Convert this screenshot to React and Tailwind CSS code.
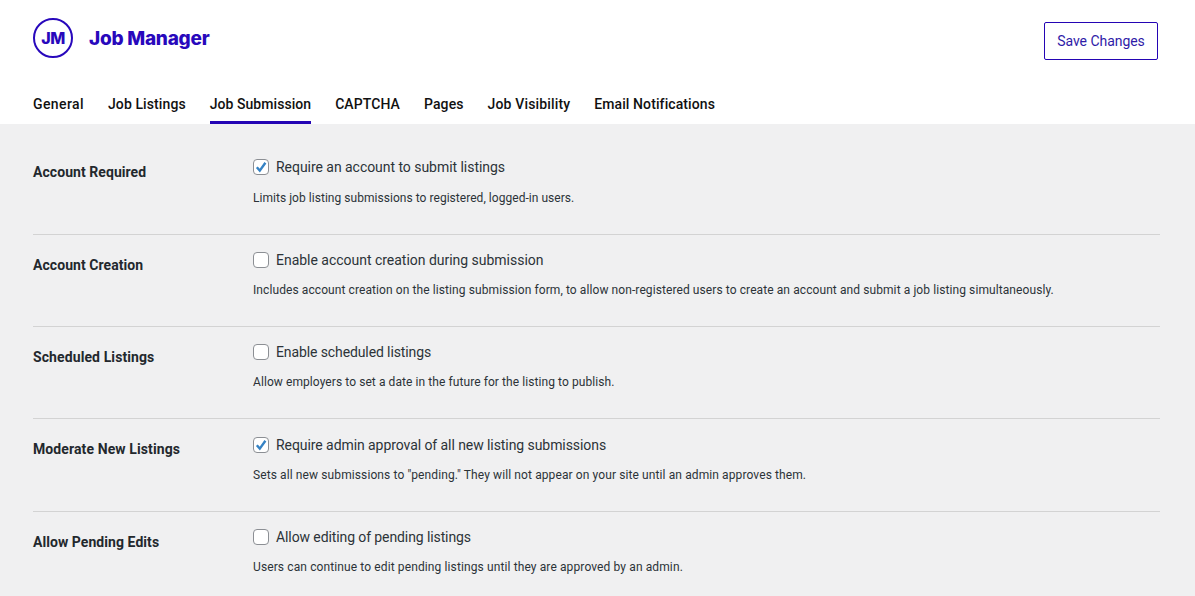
const rows = [
  { label: "Account Required", labelTrack: "tracking-[0.06px]", checked: true, text: "Require an account to submit listings", textTrack: "tracking-[-0.04px]", desc: "Limits job listing submissions to registered, logged-in users.", descTrack: "tracking-[0.04px]", top: "pt-[34px]", labelTop: "pt-[40px]", gap: "mt-[14px]", height: "h-[110px]" },
  { label: "Account Creation", labelTrack: "tracking-[0.06px]", checked: false, text: "Enable account creation during submission", textTrack: "tracking-[-0.02px]", desc: "Includes account creation on the listing submission form, to allow non-registered users to create an account and submit a job listing simultaneously.", descTrack: "tracking-[0.09px]", top: "pt-[16px]", labelTop: "pt-[22px]", gap: "mt-[13px]", height: "h-[92.2px] border-t border-[#d3d3d3]" },
  { label: "Scheduled Listings", labelTrack: "tracking-[0.1px]", checked: false, text: "Enable scheduled listings", textTrack: "tracking-[-0.11px]", desc: "Allow employers to set a date in the future for the listing to publish.", descTrack: "tracking-[0.08px]", top: "pt-[16px]", labelTop: "pt-[22px]", gap: "mt-[13px]", height: "h-[92.2px] border-t border-[#d3d3d3]" },
  { label: "Moderate New Listings", labelTrack: "tracking-[0.1px]", checked: true, text: "Require admin approval of all new listing submissions", textTrack: "tracking-[-0.07px]", desc: "Sets all new submissions to \"pending.\" They will not appear on your site until an admin approves them.", descTrack: "tracking-[0.105px]", top: "pt-[17px]", labelTop: "pt-[22px]", gap: "mt-[13px]", height: "h-[92.2px] border-t border-[#d3d3d3]" },
  { label: "Allow Pending Edits", labelTrack: "tracking-[0.06px]", checked: false, text: "Allow editing of pending listings", textTrack: "tracking-[-0.1px]", desc: "Users can continue to edit pending listings until they are approved by an admin.", descTrack: "tracking-[0.115px]", top: "pt-[16px]", labelTop: "pt-[22px]", gap: "mt-[13px]", height: "h-[92.2px] border-t border-[#d3d3d3]" },
];
const tabs = [
  ["General", "tracking-[0.4px]"],
  ["Job Listings", "tracking-[0.1px]"],
  ["Job Submission", "tracking-[0.05px]"],
  ["CAPTCHA", "tracking-[0.1px]"],
  ["Pages", "tracking-[0.1px]"],
  ["Job Visibility", "tracking-[0.15px]"],
  ["Email Notifications", "tracking-[0.1px]"],
];

function Box({ checked }) {
  return (
    <span className="w-4 h-4 shrink-0 rounded-[4px] border border-[#8c8f94] bg-white flex items-center justify-center">
      {checked && (
        <svg width="14" height="14" viewBox="0 0 14 14" fill="none">
          <path d="M2.8 7.2 L5.8 10.6 L11.4 2.8" stroke="#3582c4" strokeWidth="2.4" />
        </svg>
      )}
    </span>
  );
}

export default function App() {
  return (
    <div className="w-[1195px] h-[596px] overflow-hidden bg-white font-['Roboto',sans-serif]">
      <header className="h-[124px] bg-white px-[33px] flex flex-col">
        <div className="flex justify-between items-start pr-[4px]">
          <div className="flex items-center mt-[18px]">
            <span className="w-10 h-10 rounded-full border-[2.5px] border-[#2808bc] flex items-center justify-center text-[#2808bc] text-[16px] font-extrabold tracking-[-0.5px] font-['Inter',sans-serif]">JM</span>
            <span className="ml-4 pt-[2px] text-[#2808bc] text-[19px] font-extrabold tracking-[-0.25px] font-['Inter',sans-serif]">Job Manager</span>
          </div>
          <button className="mt-[22px] w-[114px] h-[38px] rounded-[2px] border border-[#2404b4] text-[#2f1ba8] text-[14px] tracking-[-0.05px] bg-white">Save Changes</button>
        </div>
        <nav className="mt-auto flex gap-6">
          {tabs.map(([t, track]) => (
            <a key={t} className={"h-[39px] pt-[11px] text-[14px] font-medium leading-[17px] text-[#111] " + track + (t === "Job Submission" ? " border-b-[3px] border-[#2404b4]" : "")}>{t}</a>
          ))}
        </nav>
      </header>
      <main className="bg-[#f0f0f1] h-[472px] pl-[33px] pr-[35px]">
        {rows.map((r) => (
          <div key={r.label} className={"flex " + r.height}>
            <div className={"w-[220px] shrink-0 text-[14px] font-bold leading-[17px] text-[#23282d] " + r.labelTrack + " " + r.labelTop}>{r.label}</div>
            <div className={"flex-1 " + r.top}>
              <div className="flex items-center gap-[7px] h-[18px]">
                <Box checked={r.checked} />
                <span className={"text-[14px] leading-[18px] text-[#2c3338] " + r.textTrack}>{r.text}</span>
              </div>
              <p className={"text-[12px] leading-[16px] text-[#2c3338] " + r.descTrack + " " + r.gap}>{r.desc}</p>
            </div>
          </div>
        ))}
      </main>
    </div>
  );
}
